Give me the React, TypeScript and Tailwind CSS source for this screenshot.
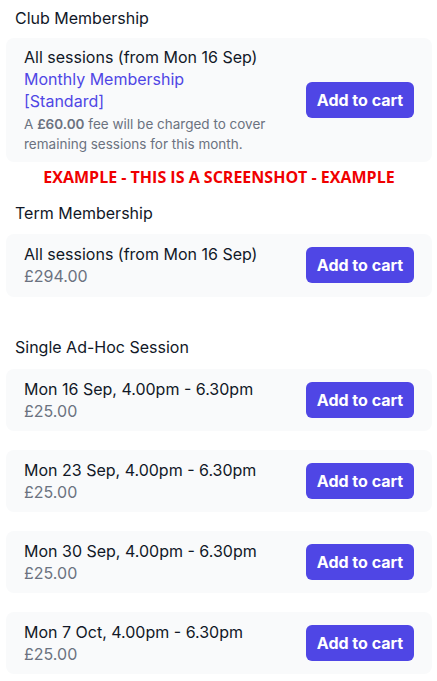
import React from 'react';

const sessions = [
  'Mon 16 Sep, 4.00pm - 6.30pm',
  'Mon 23 Sep, 4.00pm - 6.30pm',
  'Mon 30 Sep, 4.00pm - 6.30pm',
  'Mon 7 Oct, 4.00pm - 6.30pm',
];

const CartButton: React.FC = () => (
  <button className="h-9 w-[108px] shrink-0 rounded-md bg-[#4f46e5] text-base font-bold text-white">
    Add to cart
  </button>
);

const Heading: React.FC<{ children: React.ReactNode }> = ({ children }) => (
  <h3 className="pl-[9px] text-base leading-6 text-[#111827]">{children}</h3>
);

const App: React.FC = () => {
  return (
    <div className="min-h-screen bg-white pl-[6px] pr-[5px] pt-[6px]" style={{ fontFamily: 'Inter, sans-serif' }}>
      {/* Club membership */}
      <Heading>Club Membership</Heading>
      <div className="mt-2 flex items-center justify-between rounded-lg bg-[#f9fafb] pb-[8px] pl-[18px] pr-[18px] pt-[8px]">
        <div className="max-w-[244px]">
          <p className="text-base leading-[22px] text-[#111827]">All sessions (from Mon 16 Sep)</p>
          <p className="text-base leading-[22px] text-[#4f46e5]">Monthly Membership [Standard]</p>
          <p className="mt-[2px] text-[13.5px] leading-5 text-[#6b7280]">
            A <span className="font-semibold">£60.00</span> fee will be charged to cover remaining sessions for this month.
          </p>
        </div>
        <CartButton />
      </div>

      <p
        className="mt-[3px] text-center text-base font-bold leading-6 text-[#f00000]"
        style={{ fontFamily: '"Open Sans", sans-serif' }}
      >
        EXAMPLE - THIS IS A SCREENSHOT - EXAMPLE
      </p>

      {/* Term membership */}
      <div className="mt-3">
        <Heading>Term Membership</Heading>
      </div>
      <div className="mt-[9px] flex items-center justify-between rounded-lg bg-[#f9fafb] pb-[10px] pl-[18px] pr-[18px] pt-[9px]">
        <div>
          <p className="text-base leading-[22px] text-[#111827]">All sessions (from Mon 16 Sep)</p>
          <p className="text-base leading-[22px] text-[#6b7280]">£294.00</p>
        </div>
        <CartButton />
      </div>

      {/* Single sessions */}
      <div className="mt-[38px]">
        <Heading>Single Ad-Hoc Session</Heading>
      </div>
      <div className="mt-[10px] flex flex-col gap-[19px]">
        {sessions.map((s) => (
          <div
            key={s}
            className="flex items-center justify-between rounded-lg bg-[#f9fafb] py-[9px] pl-[18px] pr-[18px]"
          >
            <div>
              <p className="text-base leading-[22px] text-[#111827]">{s}</p>
              <p className="text-base leading-[22px] text-[#6b7280]">£25.00</p>
            </div>
            <CartButton />
          </div>
        ))}
      </div>
    </div>
  );
};

export default App;
